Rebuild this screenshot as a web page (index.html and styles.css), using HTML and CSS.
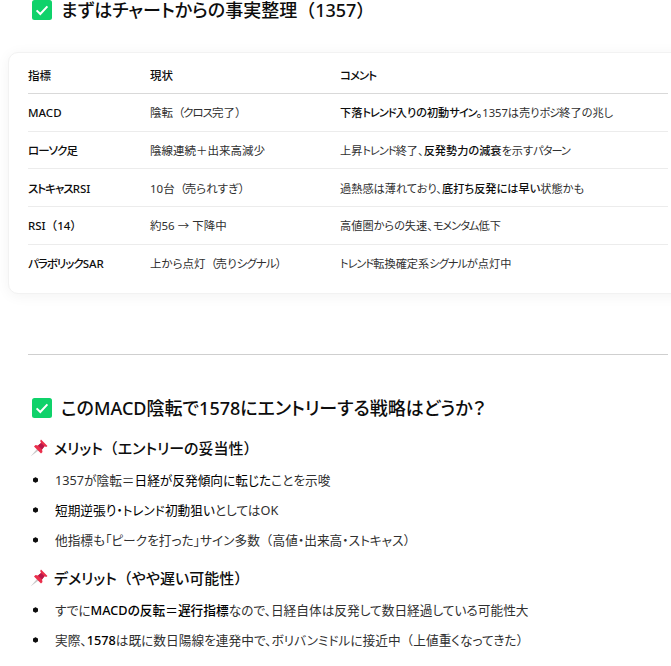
FILE: index.html
```html
<!DOCTYPE html>
<html lang="ja">
<head>
<meta charset="utf-8">
<title>MACD</title>
<link rel="stylesheet" href="styles.css">
</head>
<body>
<svg class="defs" width="0" height="0" aria-hidden="true">
  <symbol id="check" viewBox="0 0 20 20">
    <rect width="20" height="20" rx="2.5" fill="#0fd26a"/>
    <path d="M4.6 10.400 8.300 14l7.100-7.600" fill="none" stroke="#fff" stroke-width="2"/>
  </symbol>
  <symbol id="pin" viewBox="0 0 18 18">
    <path d="M.5 17.500 7 10 8.500 11.500Z" fill="#c9c9c9"/>
    <path d="M11 .5 17.500 7 16.200 8 14.500 7.300 12 10.500 12.500 13 11 14.500 4 7.500 5.500 6 8 6.500 11 4 10.200 2Z" fill="#ea2f4b"/>
    <path d="M8 6.500 11 4 14.500 7.300 12 10.500Z" fill="#b8174a"/>
  </symbol>
</svg>
<main class="page">
  <h2 class="title first"><svg class="check"><use href="#check"/></svg>まずはチャートからの事実整理<span class="p">（</span>1357<span class="p">）</span></h2>
  <div class="card">
    <table class="table">
      <thead>
        <tr><th class="c1">指標</th><th class="c2">現状</th><th><span class="k">コメント</span></th></tr>
      </thead>
      <tbody>
        <tr><td class="name">MACD</td><td class="state">陰転<span class="p">（</span><span class="k">クロス</span>完了<span class="p">）</span></td><td class="note"><b>下落<span class="k">トレンド</span>入りの初動<span class="k">サイン</span>。</b>1357は売り<span class="k">ポジ</span>終了の兆し</td></tr>
        <tr><td class="name"><span class="k">ローソク</span>足</td><td class="state">陰線連続＋出来高減少</td><td class="note">上昇<span class="k">トレンド</span>終了、<b>反発勢力の減衰</b>を示す<span class="k">パターン</span></td></tr>
        <tr><td class="name"><span class="k">ストキャス</span>RSI</td><td class="state">10台<span class="p">（</span>売られすぎ<span class="p">）</span></td><td class="note">過熱感は薄れており、<b>底打ち反発には早い</b>状態かも</td></tr>
        <tr><td class="name">RSI<span class="p">（</span>14<span class="p">）</span></td><td class="state">約56 → 下降中</td><td class="note">高値圏からの失速、<span class="k">モメンタム</span>低下</td></tr>
        <tr><td class="name"><span class="k">パラボリック</span>SAR</td><td class="state">上から点灯<span class="p">（</span>売り<span class="k">シグナル</span><span class="p">）</span></td><td class="note"><span class="k">トレンド</span>転換確定系<span class="k">シグナル</span>が点灯中</td></tr>
      </tbody>
    </table>
  </div>
  <hr class="rule">
  <h2 class="title"><svg class="check"><use href="#check"/></svg>このMACD陰転で1578にエントリーする戦略はどうか？</h2>
  <h3 class="sub"><svg class="pin"><use href="#pin"/></svg>メリット<span class="p">（</span>エントリーの妥当性<span class="p">）</span></h3>
  <ul class="list">
    <li>1357が陰転＝<b>日経が反発傾向に転じた</b>ことを示唆</li>
    <li><b>短期逆張り・トレンド初動狙い</b>としてはOK</li>
    <li>他指標も「ピークを打った」サイン多数<span class="p">（</span>高値・出来高・ストキャス<span class="p">）</span></li>
  </ul>
  <h3 class="sub"><svg class="pin"><use href="#pin"/></svg>デメリット<span class="p">（</span>やや遅い可能性<span class="p">）</span></h3>
  <ul class="list">
    <li>すでに<b class="strong">MACDの反転＝遅行指標</b>なので、日経自体は反発して数日経過している可能性大</li>
    <li>実際、<b class="strong">1578</b>は既に数日陽線を連発中で、ボリバンミドルに接近中<span class="p">（</span>上値重くなってきた<span class="p">）</span></li>
  </ul>
</main>
</body>
</html>
```
FILE: styles.css
```css
html, body {
  margin: 0;
  height: 666px;
  overflow: hidden;
  background: #fff;
}
body {
  font-family: "Noto Sans", "Noto Sans CJK JP", sans-serif;
  font-feature-settings: "palt";
  color: #0d0d0d;
  font-size: 12px;
}
.defs { position: absolute; }
.p { font-feature-settings: normal; }
.k { letter-spacing: -1px; }
.page {
  width: 640px;
  margin-left: 28px;
}
.title {
  display: flex;
  align-items: center;
  margin: 0;
  font-size: 18px;
  line-height: 30px;
  font-weight: 500;
  white-space: nowrap;
}
.title.first { line-height: 20px; }
.check {
  width: 20px;
  height: 20px;
  margin: 0 9px 0 4px;
  flex: none;
}
.card {
  width: 700px;
  box-sizing: border-box;
  margin: 32px 0 0 -20px;
  padding: 4px 0 12px 19px;
  border-radius: 10px;
  background: #fff;
  border: 1px solid #f2f2f2;
  box-shadow: 0 2px 14px rgba(0, 0, 0, 0.05);
}
.table {
  border-collapse: collapse;
  width: 640px;
  table-layout: fixed;
  font-size: 11.5px;
}
.table th {
  text-align: left;
  font-weight: 500;
  height: 36px;
  padding: 0;
  border-bottom: 1px solid #d9d9d9;
}
.table td {
  height: 36.7px;
  padding: 0;
  border-bottom: 1px solid #ececec;
  white-space: nowrap;
  color: #303030;
}
.table tr:last-child td { border-bottom: 0; }
.table td.name { font-weight: 500; color: #0d0d0d; }
.table td.note { font-size: 11.2px; }
.table .state .p { letter-spacing: -1.5px; }
.table b { font-weight: 500; color: #0d0d0d; }
.c1 { width: 122px; }
.c2 { width: 190px; }
.rule {
  margin: 60px 0 0;
  border: 0;
  border-top: 1px solid #cfcfcf;
}
.rule + .title { margin-top: 38px; }
.sub {
  display: flex;
  align-items: center;
  margin: 13px 0 0;
  font-size: 15px;
  line-height: 24px;
  font-weight: 500;
  white-space: nowrap;
}
.list + .sub { margin-top: 11px; }
.pin {
  width: 18px;
  height: 18px;
  margin: 0 6px 0 2px;
  flex: none;
}
.list {
  margin: 5px 0 0;
  padding: 0;
  list-style: none;
  font-size: 12.700px;
}
.list li {
  line-height: 30px;
  padding-left: 27px;
  white-space: nowrap;
  color: #303030;
  background: radial-gradient(circle 2.800px at 7.500px 50%, #0d0d0d 85%, transparent);
}
.list b { font-weight: 400; color: #000; }
.list b.strong { font-weight: 500; }
```
